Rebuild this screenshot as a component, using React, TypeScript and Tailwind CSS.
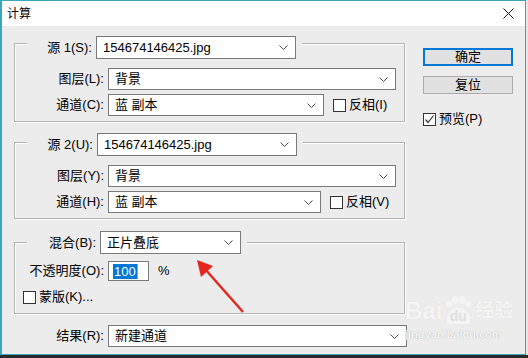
import type { ReactNode } from 'react';

const font = "font-['Liberation_Sans','Noto_Sans_CJK_SC',sans-serif]";

function Chevron() {
  return (
    <svg width="9" height="5" viewBox="0 0 9 5" className="shrink-0">
      <polyline points="0.5,0.5 4.5,4.5 8.5,0.5" fill="none" stroke="#4d4d4d" strokeWidth="1" />
    </svg>
  );
}

function Combo({ text, className }: { text: string; className: string }) {
  return (
    <div className={`flex items-center justify-between border border-[#7a7a7a] bg-white pl-[6px] pr-[7px] ${className}`}>
      <span className="whitespace-nowrap">{text}</span>
      <Chevron />
    </div>
  );
}

function Check({ label, checked, className = '' }: { label: ReactNode; checked?: boolean; className?: string }) {
  return (
    <div className={`flex items-center ${className}`}>
      <div className="flex h-[13px] w-[13px] items-center justify-center border border-[#333] bg-white">
        {checked && (
          <svg width="11" height="11" viewBox="0 0 11 11">
            <polyline points="1.5,5.5 4,8.5 9.5,1.5" fill="none" stroke="#333" strokeWidth="1.2" />
          </svg>
        )}
      </div>
      <span className="ml-[3px] whitespace-nowrap">{label}</span>
    </div>
  );
}

const groupBox = 'border border-[#b4b4b4] shadow-[inset_1px_1px_0_#fff,1px_1px_0_#fff]';

export default function App() {
  return (
    <div className={`relative h-[358px] w-[528px] overflow-hidden bg-[#e6e6e6] text-[13px] leading-[18px] text-black ${font}`}>
      <div className="flex h-[355px] w-[526px] flex-col border border-l-2 border-[#3aa6bd] bg-[#ececec]">
        {/* title bar */}
        <div className="flex h-[25px] shrink-0 items-center justify-between bg-white pl-[5px] pr-[11px] text-[12px]">
          <span>计算</span>
          <svg width="11" height="11" viewBox="0 0 11 11">
            <path d="M0.5 0.5 L10.5 10.5 M10.5 0.5 L0.5 10.5" stroke="#111" strokeWidth="1" />
          </svg>
        </div>

        <div className="flex flex-1 pl-[12px]">
          {/* left column */}
          <div className="flex w-[393px] flex-col">
            {/* source 1 */}
            <div className={`mt-[17px] w-[391px] pb-[5px] ${groupBox}`}>
              <div className="-mt-[8px] ml-[12px] flex w-fit items-center bg-[#ececec] pr-[6px]">
                <span className="w-[65px] text-right">源 1(S):</span>
                <Combo text="154674146425.jpg" className="ml-[4px] h-[23px] w-[200px]" />
              </div>
              <div className="mt-[9px] flex items-center">
                <span className="w-[89px] text-right">图层(L):</span>
                <Combo text="背景" className="ml-[4px] h-[22px] w-[288px]" />
              </div>
              <div className="mt-[4px] flex items-center">
                <span className="w-[89px] text-right">通道(C):</span>
                <Combo text="蓝 副本" className="ml-[4px] h-[22px] w-[216px]" />
                <Check label="反相(I)" className="ml-[9px]" />
              </div>
            </div>

            {/* source 2 */}
            <div className={`mt-[20px] w-[391px] pb-[5px] ${groupBox}`}>
              <div className="-mt-[10px] ml-[12px] flex w-fit items-center bg-[#ececec] pr-[6px]">
                <span className="w-[66px] text-right">源 2(U):</span>
                <Combo text="154674146425.jpg" className="ml-[4px] h-[23px] w-[200px]" />
              </div>
              <div className="mt-[9px] flex items-center">
                <span className="w-[89px] text-right">图层(Y):</span>
                <Combo text="背景" className="ml-[4px] h-[22px] w-[288px]" />
              </div>
              <div className="mt-[4px] flex items-center">
                <span className="w-[89px] text-right">通道(H):</span>
                <Combo text="蓝 副本" className="ml-[4px] h-[22px] w-[213px]" />
                <Check label="反相(V)" className="ml-[9px]" />
              </div>
            </div>

            {/* blend */}
            <div className={`mt-[23px] w-[391px] pb-[7px] ${groupBox}`}>
              <div className="-mt-[12px] ml-[12px] flex w-fit items-center bg-[#ececec] pr-[6px]">
                <span className="w-[69px] text-right">混合(B):</span>
                <Combo text="正片叠底" className="ml-[4px] h-[23px] w-[141px]" />
              </div>
              <div className="mt-[7px] flex items-center">
                <span className="w-[89px] text-right">不透明度(O):</span>
                <div className="ml-[4px] flex h-[20px] w-[41px] items-center border border-[#7a7a7a] bg-white pl-[4px]">
                  <span className="bg-[#0078d7] px-[1px] leading-[15px] text-white">100</span>
                  <span className="h-[15px] w-[1px] bg-[#ff8c00]" />
                </div>
                <span className="ml-[9px]">%</span>
              </div>
              <Check label="蒙版(K)..." className="ml-[8px] mt-[7px]" />
            </div>

            {/* result */}
            <div className="mt-[11px] flex items-center">
              <span className="w-[90px] text-right">结果(R):</span>
              <Combo text="新建通道" className="ml-[4px] h-[22px] w-[299px]" />
            </div>
          </div>

          {/* right column */}
          <div className="ml-[16px] flex w-[90px] flex-col">
            <div className="mt-[22px] flex h-[18px] items-center justify-center border-2 border-[#0078d7] bg-[#e1e1e1]">
              确定
            </div>
            <div className="mt-[10px] flex h-[18px] items-center justify-center border border-[#adadad] bg-[#e1e1e1]">
              复位
            </div>
            <Check label="预览(P)" checked className="mt-[16px]" />
          </div>
        </div>
      </div>

      {/* bottom strip behind the window */}
      <div className="h-[3px] w-full bg-[#2a2a2a]" />

      {/* watermark */}
      <div className="pointer-events-none absolute left-[405px] top-[296px] flex flex-col items-start text-[#f7f7f7] opacity-80">
        <div className="flex items-end font-bold leading-[26px]">
          <span className="text-[24px] [text-shadow:0_0_1px_#d4d4d4]">Bai</span>
          <div className="ml-[2px] flex flex-col items-center">
            <svg width="28" height="12" viewBox="0 0 28 12">
              <circle cx="5" cy="8" r="3" fill="#f7f7f7" />
              <circle cx="11" cy="4" r="3.4" fill="#f7f7f7" />
              <circle cx="18" cy="4" r="3.4" fill="#f7f7f7" />
              <circle cx="24" cy="8" r="3" fill="#f7f7f7" />
            </svg>
            <span className="rounded-t-[12px] bg-[#f7f7f7] px-[3px] text-[14px] leading-[16px] text-[#dcdcdc]">du</span>
          </div>
          <span className="ml-[3px] text-[19px] [text-shadow:0_0_1px_#d4d4d4]">经验</span>
        </div>
        <span className="mt-[4px] text-[11px] font-bold leading-[12px] text-[#fafafa] [text-shadow:0_0_1px_#9a9a9a]">jingyan.baidu.com</span>
      </div>

      {/* red arrow */}
      <svg className="pointer-events-none absolute left-0 top-0" width="528" height="358">
        <line x1="243" y1="312" x2="205" y2="269" stroke="#e5261f" strokeWidth="2.5" />
        <polygon points="197,260 213,266 201,277" fill="#e5261f" />
      </svg>
    </div>
  );
}
